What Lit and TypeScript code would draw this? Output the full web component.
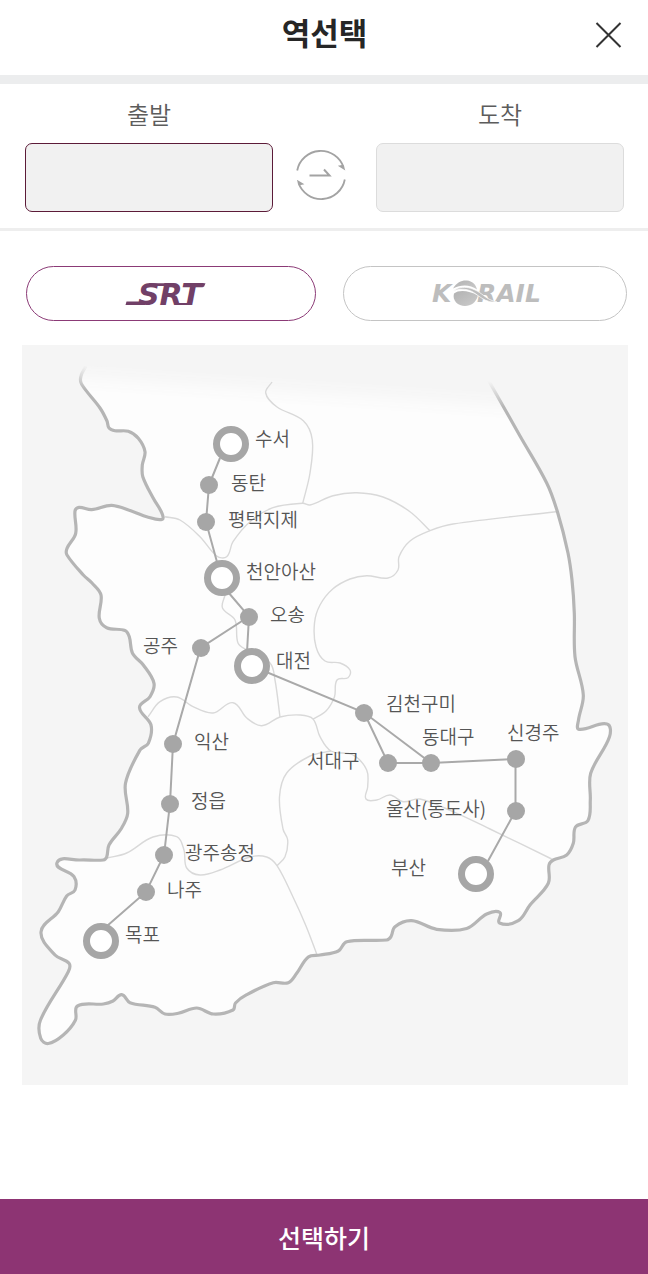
import { LitElement, html, svg, css } from "lit";
import { customElement, state } from "lit/decorators.js";
import { classMap } from "lit/directives/class-map.js";
import { styleMap } from "lit/directives/style-map.js";

type Point = [number, number];

interface Station {
  name: string;
  at: Point;
  label: Point;
  major?: boolean;
}

/* Map space: x 22..628, y 345..1085 */
const MAP = { x: 22, y: 345, w: 606, h: 740 };

const STATIONS: Station[] = [
  { name: "수서", at: [230.5, 444], label: [255, 439], major: true },
  { name: "동탄", at: [209, 485], label: [231, 483] },
  { name: "평택지제", at: [206, 522], label: [228, 520] },
  { name: "천안아산", at: [221.5, 577.5], label: [246, 572], major: true },
  { name: "오송", at: [249, 616.5], label: [270, 615] },
  { name: "공주", at: [200.5, 648], label: [143, 646] },
  { name: "대전", at: [252, 666], label: [276, 661], major: true },
  { name: "익산", at: [173, 744], label: [194, 742] },
  { name: "정읍", at: [170, 803.5], label: [191, 801] },
  { name: "광주송정", at: [164, 855], label: [185, 853] },
  { name: "나주", at: [146, 892], label: [167, 890] },
  { name: "목포", at: [100.5, 940.5], label: [125, 935], major: true },
  { name: "김천구미", at: [364, 712.5], label: [386, 704] },
  { name: "서대구", at: [388, 763], label: [307, 761] },
  { name: "동대구", at: [431, 763], label: [422, 737] },
  { name: "신경주", at: [515.5, 759], label: [507, 733] },
  { name: "울산(통도사)", at: [515.5, 811], label: [386, 809] },
  { name: "부산", at: [476, 874], label: [391, 868], major: true },
];

/* A stop is a station, or the point where a line meets a ring. */
const ROUTES: (string | Point)[][] = [
  [[220, 458], "동탄", "평택지제", [217, 562]],
  [[228, 592], "오송", [247, 652]],
  ["대전", "김천구미", "동대구", "신경주", "울산(통도사)", [488, 861]],
  ["오송", "공주", "익산", "정읍", "광주송정", "나주", [107, 926]],
  ["김천구미", "서대구", "동대구"],
];

const COAST: Point[] = [
  [86, 366], [81, 376], [81.5, 384], [100, 408], [107, 421], [109, 428], [115, 430.7], [128.3, 431.3], [138.3, 438.3],
  [145, 451.7], [142.3, 465], [142.8, 476.7], [153.3, 498.3], [162, 513.3], [162, 519.5], [146.7, 516.7],
  [133.3, 511.7], [111.7, 505.3], [91.7, 509.7], [79, 507.3], [75, 511], [75.7, 533.3], [67, 548.3],
  [67, 555], [83.3, 575], [92, 583], [101, 595], [99.3, 618.3], [106.7, 627.7], [125, 630.5], [129.3, 636.7],
  [132.5, 653.3], [143.3, 665], [154, 683.3], [150, 696.7], [139.5, 707.5], [151, 725], [148.3, 743.3],
  [140, 750], [125.5, 783.3], [127.7, 813.3], [121, 829], [109, 845], [106.7, 857], [103.3, 860], [80, 860],
  [57, 862.7], [74, 876.7], [75, 890], [66.7, 896], [58.3, 911.7], [41, 932], [55, 955], [69, 963.3],
  [68.3, 971.7], [40.5, 1020], [40.7, 1038.3], [48.3, 1043.5], [63.3, 1035], [75.5, 1020], [77.5, 1006],
  [103.3, 1004], [113, 1001], [121.7, 994.7], [130, 1002.7], [155, 1007.3], [165, 1014], [178.3, 1013.3], [196.7, 1008],
  [213.3, 1014], [233, 1010], [235.5, 1003], [246.7, 994.7], [273.3, 982.7], [288.3, 982.7], [296.7, 973.3],
  [308.3, 957], [320, 955], [338.3, 951], [346.7, 941.7], [386.7, 940], [391, 936.7], [395, 926.7],
  [411.7, 920.7], [436.7, 929.3], [466.7, 928.5], [486.7, 914], [500, 912.5], [499.5, 923], [518.3, 920.7],
  [530, 905], [548.3, 883.3], [549, 865], [553.3, 860], [566.7, 855], [573.3, 843.3], [575.5, 827],
  [588, 820.5], [590.3, 800], [590.7, 773.3], [609.5, 736.7], [607, 724], [579, 729.3], [578.5, 720],
  [583.3, 695], [575, 656.7], [574.3, 613], [572, 580], [568, 553], [557.5, 512], [546.7, 483], [520, 436],
  [490, 383], [484, 372],
];

const BORDERS: Point[][] = [
  [[272, 382], [265.7, 393], [276.7, 406.7], [303.3, 420.7], [312.3, 440], [310, 473], [302.7, 503.3]],
  [[165, 516.7], [180, 520], [200, 536.7], [216.7, 556], [226.7, 556.7], [233, 541.7], [250, 521.7], [273, 507.7],
    [302.7, 503.3], [310, 505], [333, 495.7], [356.7, 492.7], [383, 497], [410, 511.7], [430, 530.7]],
  [[556, 511.7], [453, 524], [430, 530.7], [410, 541], [399, 556.7], [398, 570], [388, 578], [366.7, 575.7],
    [350, 579], [332.7, 589], [320, 605], [314.5, 623], [316, 646.7], [325, 661], [340, 663], [350, 670],
    [348, 677.7], [337, 680], [334.5, 696.7], [326, 711], [313, 719]],
  [[148, 716.7], [160, 701.7], [176.7, 697], [193, 706.7], [213, 713], [233, 702.7], [246.7, 718], [261.7, 725.7],
    [280, 717], [300, 715], [313, 719], [320, 736.7], [331, 751], [353, 755], [366.7, 770], [367.7, 786.7],
    [366, 799], [376.7, 800], [390, 795], [403, 801.7], [420, 799], [453, 811.7], [490, 829], [551.7, 859]],
  [[225, 595], [222.5, 608], [235, 620], [238, 643], [246.7, 650], [270, 663], [275, 680], [280, 717]],
  [[331, 751], [310, 756], [286.7, 773], [279.5, 796.7], [283, 829], [287.7, 840], [285, 856.7], [277, 865.7]],
  [[107, 858], [126.7, 853], [153, 837], [176.7, 836.7], [184, 850], [186.7, 868], [200, 875], [220, 870],
    [250, 857], [266.7, 857], [277, 865.7], [293, 897], [306, 926], [316.7, 954]],
];

/** Smooth curve through all the points. */
function smooth(points: Point[]): string {
  let d = `M${points[0][0]} ${points[0][1]}`;
  for (let i = 0; i < points.length - 1; i++) {
    const a = points[Math.max(i - 1, 0)];
    const b = points[i];
    const c = points[i + 1];
    const e = points[Math.min(i + 2, points.length - 1)];
    const chord = Math.hypot(c[0] - b[0], c[1] - b[1]);
    const handle = (p: Point, q: Point): Point => {
      const length = Math.hypot(q[0] - p[0], q[1] - p[1]) || 1;
      return [((q[0] - p[0]) / length) * chord * 0.34, ((q[1] - p[1]) / length) * chord * 0.34];
    };
    const h1 = handle(a, c);
    const h2 = handle(b, e);
    const n = [b[0] + h1[0], b[1] + h1[1], c[0] - h2[0], c[1] - h2[1], c[0], c[1]];
    d += `C${n.map((v) => v.toFixed(1)).join(" ")}`;
  }
  return d;
}

const FONT = css`"Noto Sans CJK KR", "Noto Sans", sans-serif`;

@customElement("station-map")
class StationMap extends LitElement {
  static styles = css`
    :host {
      display: block;
      font-family: ${FONT};
    }
    .map {
      position: relative;
      aspect-ratio: 606 / 740;
      background: #f5f5f5;
    }
    .land {
      display: block;
      width: 100%;
      height: 100%;
    }
    .station {
      position: absolute;
      box-sizing: border-box;
      width: 18px;
      height: 18px;
      margin: -9px 0 0 -9px;
      padding: 0;
      border: 0;
      border-radius: 50%;
      background: #a6a6a6;
      font: inherit;
      cursor: pointer;
    }
    .major {
      width: 36px;
      height: 36px;
      margin: -18px 0 0 -18px;
      border: 7px solid #a6a6a6;
      background: #fff;
    }
    .name {
      position: absolute;
      font-size: 19px;
      font-weight: 350;
      line-height: 28px;
      margin-top: -15px;
      color: #555;
      white-space: nowrap;
    }
  `;

  private choose(name: string) {
    this.dispatchEvent(new CustomEvent("station", { detail: name }));
  }

  render() {
    const coast = smooth(COAST);
    const place = (stop: string | Point) =>
      (typeof stop === "string" ? STATIONS.find((s) => s.name === stop)!.at : stop).join(",");
    return html`
      <div class="map">
        <svg class="land" viewBox="${MAP.x} ${MAP.y} ${MAP.w} ${MAP.h}" aria-hidden="true">
          <defs>
            <linearGradient id="fade" gradientUnits="userSpaceOnUse" x1="286" y1="376" x2="284" y2="406">
              <stop offset="0" stop-color="#000" />
              <stop offset="1" stop-color="#fff" />
            </linearGradient>
            <linearGradient id="edge" gradientUnits="userSpaceOnUse" x1="282" y1="373" x2="281" y2="398">
              <stop offset="0" stop-color="#b5b5b5" stop-opacity="0" />
              <stop offset="1" stop-color="#b5b5b5" />
            </linearGradient>
            <mask id="north" maskUnits="userSpaceOnUse" x="22" y="345" width="606" height="740">
              <rect x="22" y="345" width="606" height="740" fill="url(#fade)" />
            </mask>
          </defs>
          <path d="${coast}Z" fill="#fdfdfd" mask="url(#north)" />
          ${BORDERS.map((b) => svg`<path d=${smooth(b)} fill="none" stroke="#d9d9d9" stroke-width="1.4" />`)}
          <path d=${coast} fill="none" stroke="url(#edge)" stroke-width="3.2" stroke-linejoin="round" />
          ${ROUTES.map(
            (r) => svg`<polyline points=${r.map(place).join(" ")} fill="none" stroke="#a9a9a9" stroke-width="2" />`,
          )}
        </svg>
        ${STATIONS.map(
          (s) => html`
            <button
              type="button"
              id=${"s-" + s.name}
              aria-label=${s.name}
              class=${classMap({ station: true, major: !!s.major })}
              style=${styleMap({
                left: `${((s.at[0] - MAP.x) / MAP.w) * 100}%`,
                top: `${((s.at[1] - MAP.y) / MAP.h) * 100}%`,
              })}
              @click=${() => this.choose(s.name)}
            ></button>
            <label
              class="name"
              for=${"s-" + s.name}
              style=${styleMap({
                left: `${((s.label[0] - MAP.x) / MAP.w) * 100}%`,
                top: `${((s.label[1] - MAP.y) / MAP.h) * 100}%`,
              })}
              >${s.name}</label
            >
          `,
        )}
      </div>
    `;
  }
}

@customElement("app-root")
class AppRoot extends LitElement {
  static styles = css`
    :host {
      display: block;
      font-family: ${FONT};
      color: #666;
      background: #fff;
    }
    button {
      font: inherit;
      color: inherit;
      padding: 0;
      cursor: pointer;
    }
    svg {
      display: block;
      overflow: visible;
    }
    .page {
      display: flex;
      flex-direction: column;
      min-height: 100vh;
    }
    .header {
      display: grid;
      grid-template-columns: 32px 1fr 32px;
      align-items: center;
      padding: 6px 23px 17px 24px;
      border-bottom: 9px solid #ecedee;
    }
    .title {
      grid-column: 2;
      margin: 0;
      text-align: center;
      font-size: 31px;
      line-height: 52px;
      font-weight: 700;
      color: #262626;
    }
    .close {
      width: 32px;
      height: 32px;
      border: 0;
      background: none;
    }
    .trip {
      display: grid;
      grid-template-columns: 1fr 103px 1fr;
      align-items: end;
      padding: 12px 24px 16px 25px;
      border-bottom: 3px solid #eee;
    }
    .field {
      display: flex;
      flex-direction: column;
      gap: 11px;
      min-width: 0;
    }
    .caption {
      text-align: center;
      font-size: 24px;
      line-height: 36px;
      font-weight: 350;
      color: #5c5c5c;
    }
    .input {
      box-sizing: border-box;
      width: 100%;
      height: 69px;
      padding: 0 16px;
      border: 1px solid #dcdcdc;
      border-radius: 7px;
      background: #f1f1f1;
      font: inherit;
      font-size: 24px;
      text-align: center;
      color: #333;
      outline: none;
    }
    .input.active {
      border-color: #5c1b38;
    }
    .swap {
      width: 50px;
      height: 50px;
      margin: 0 0 12px 23px;
      border: 0;
      background: none;
    }
    .operators {
      display: grid;
      grid-template-columns: 290fr 284fr;
      gap: 27px;
      padding: 35px 21px 24px 26px;
    }
    .operator {
      display: flex;
      align-items: center;
      justify-content: center;
      height: 55px;
      border: 1px solid #c4c4c4;
      border-radius: 28px;
      background: #fff;
    }
    .operator.selected {
      border-color: #8b3a76;
    }
    .srt {
      font: italic 700 30px "DejaVu Sans", sans-serif;
    }
    .korail {
      font: italic 700 25px "DejaVu Sans", sans-serif;
    }
    .canvas {
      margin: 0 20px 0 22px;
    }
    .submit {
      margin-top: auto;
      height: 75px;
      border: 0;
      background: #8d3473;
      color: #fff;
      font-size: 25px;
      font-weight: 500;
    }
  `;

  @state() private active: "from" | "to" = "from";
  @state() private from = "";
  @state() private to = "";
  @state() private operator = "SRT";

  private pick(e: CustomEvent<string>) {
    if (this.active === "from") {
      this.from = e.detail;
      this.active = "to";
    } else {
      this.to = e.detail;
    }
  }

  private swap() {
    [this.from, this.to] = [this.to, this.from];
  }

  private field(id: "from" | "to", caption: string, value: string) {
    return html`
      <div class="field">
        <label class="caption" for=${id}>${caption}</label>
        <input
          id=${id}
          class=${classMap({ input: true, active: this.active === id })}
          readonly
          .value=${value}
          @click=${() => (this.active = id)}
        />
      </div>
    `;
  }

  render() {
    return html`
      <div class="page">
        <header class="header">
          <h1 class="title">역선택</h1>
          <button class="close" type="button" aria-label="닫기">
            <svg width="32" height="32" viewBox="0 0 32 32" fill="none" stroke="#333" stroke-width="2">
              <path d="M3.5 7 27.5 31M27.5 7 3.5 31" />
            </svg>
          </button>
        </header>

        <section class="trip">
          ${this.field("from", "출발", this.from)}
          <button class="swap" type="button" aria-label="출발 도착 바꾸기" @click=${this.swap}>
            <svg width="50" height="50" viewBox="0 0 50 50" fill="none" stroke="#a3a3a3" stroke-width="1.8">
              <path d="M1.2 20.5A24 24 0 0 1 47.6 17.5M48.8 29.5A24 24 0 0 1 2.4 32.5" />
              <path d="M49.3 20.5 41.8 15.8 47.5 14.8ZM.9 29.8 8.4 34.2 2.6 35.4Z" fill="#a3a3a3" stroke="none" />
              <path d="M13.5 25.5H33.5L28 19.5" stroke-width="2" />
            </svg>
          </button>
          ${this.field("to", "도착", this.to)}
        </section>

        <nav class="operators">
          <button
            type="button"
            aria-label="SRT"
            class=${classMap({ operator: true, selected: this.operator === "SRT" })}
            @click=${() => (this.operator = "SRT")}
          >
            <svg width="100" height="40" viewBox="0 0 100 40" fill="#714067">
              <path d="M4.5 31 5.5 27.5H24V31ZM28 9.2H50V12H28ZM66 9.2H84.5L83 12.800H65ZM56 31 57 29H67L66 31Z" />
              <text class="srt" x="17" y="31">SRT</text>
            </svg>
          </button>
          <button
            type="button"
            aria-label="KORAIL"
            class=${classMap({ operator: true, selected: this.operator === "KORAIL" })}
            @click=${() => (this.operator = "KORAIL")}
          >
            <svg width="120" height="40" viewBox="-6 -5 120 40" fill="#bdbdbd">
              <defs>
                <linearGradient id="globe" x1="0" y1="0" x2="1" y2="1">
                  <stop offset="0" stop-color="#b2b2b2" />
                  <stop offset="1" stop-color="#cbcbcb" />
                </linearGradient>
              </defs>
              <text class="korail" x="1" y="23">K</text>
              <text class="korail" x="46" y="23">RAIL</text>
              <path d="M22 9.5C26 3 31 1 36 1.5C41 2 45 5.5 46 10.5C39 5.5 30 5.5 22 9.5Z" fill="url(#globe)" />
              <path
                d="M23 14.5C28 10.5 38 11.5 47 16.5C45 23.5 40 27 34 27C27 27 21 21.5 23 14.5Z"
                fill="url(#globe)"
              />
              <path
                d="M22 12C32 5 43 9 52 16C57 20 61 22 66 23H61C52 22 46 15 41 12.5C35 9.5 28 9.5 22 12Z"
                stroke="#fff"
                stroke-width=".7"
              />
            </svg>
          </button>
        </nav>

        <station-map class="canvas" @station=${this.pick}></station-map>

        <button class="submit" type="button">선택하기</button>
      </div>
    `;
  }
}
